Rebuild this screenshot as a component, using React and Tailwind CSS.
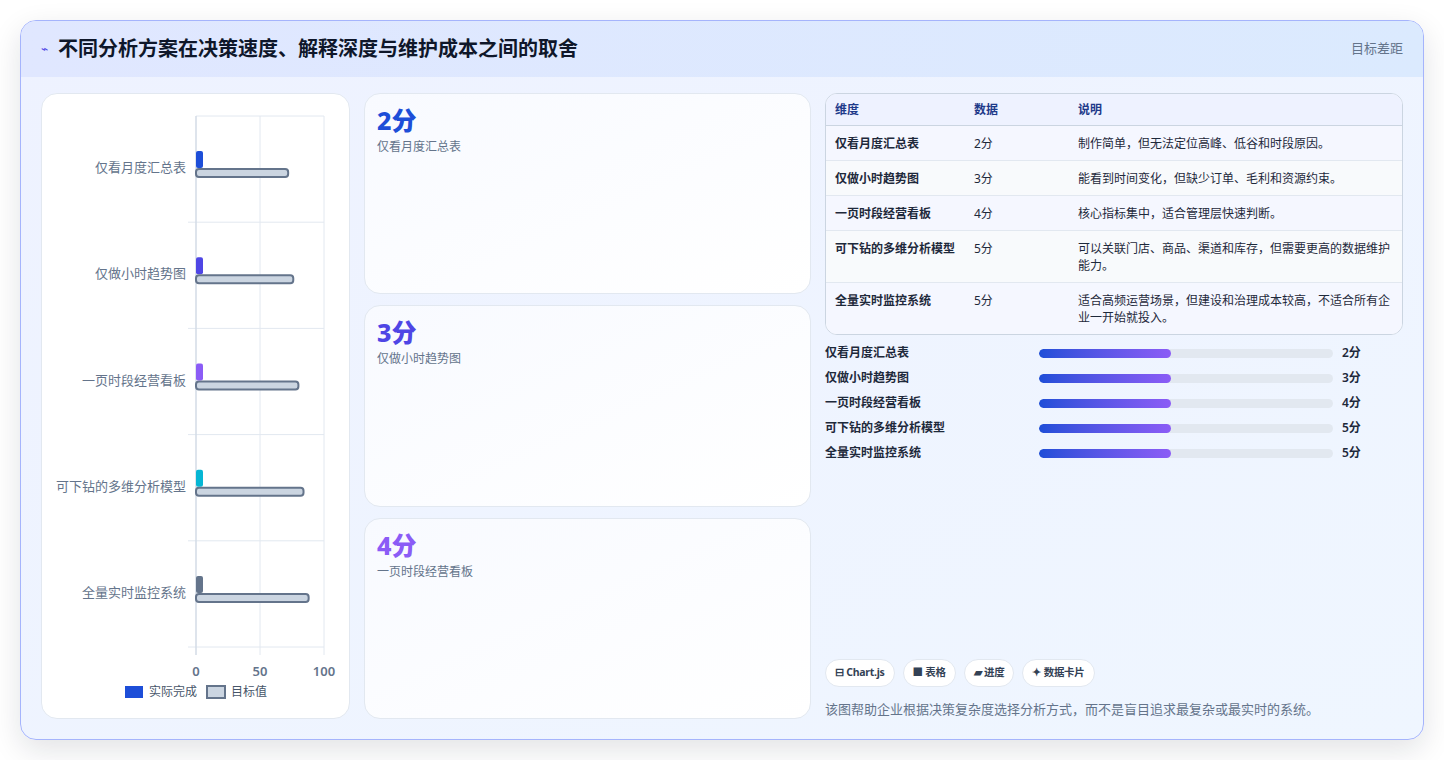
import React from 'react';

const rows = [
  { name: '仅看月度汇总表', score: '2分', note: '制作简单，但无法定位高峰、低谷和时段原因。', color: '#1d4ed8', target: 72 },
  { name: '仅做小时趋势图', score: '3分', note: '能看到时间变化，但缺少订单、毛利和资源约束。', color: '#4f46e5', target: 76 },
  { name: '一页时段经营看板', score: '4分', note: '核心指标集中，适合管理层快速判断。', color: '#8b5cf6', target: 80 },
  { name: '可下钻的多维分析模型', score: '5分', note: '可以关联门店、商品、渠道和库存，但需要更高的数据维护能力。', color: '#06b6d4', target: 84 },
  { name: '全量实时监控系统', score: '5分', note: '适合高频运营场景，但建设和治理成本较高，不适合所有企业一开始就投入。', color: '#64748b', target: 88 },
];

const Chart = () => {
  const x0 = 154, w = 128, top = 22, rowH = 106.2;
  const sx = (v) => x0 + (v / 100) * w;
  return (
    <svg width="309" height="627" className="block">
      {[0, 50, 100].map((v) => (
        <line key={v} x1={sx(v)} x2={sx(v)} y1={top} y2={top + rowH * 5 + 8} stroke="#e2e8f0" />
      ))}
      <line x1={x0} x2={x0 + w} y1={top} y2={top} stroke="#e2e8f0" />
      {[1, 2, 3, 4, 5].map((i) => (
        <line key={i} x1={x0 - 8} x2={x0 + w} y1={top + rowH * i} y2={top + rowH * i} stroke="#e2e8f0" />
      ))}
      <line x1={x0} x2={x0} y1={top} y2={top + rowH * 5 + 8} stroke="#cbd5e1" />
      {rows.map((r, i) => {
        const cy = top + rowH * i + rowH / 2;
        return (
          <g key={r.name}>
            <text x={x0 - 10} y={cy + 3} textAnchor="end" fontSize="13" fill="#64748b">{r.name}</text>
            <rect x={x0} y={cy - 18} width="7" height="17" rx="2" fill={r.color} />
            <rect x={x0} y={cy} width={(r.target / 100) * w} height="8" rx="3" fill="#cbd5e1" stroke="#64748b" strokeWidth="2" />
          </g>
        );
      })}
      {[0, 50, 100].map((v) => (
        <text key={v} x={sx(v)} y={top + rowH * 5 + 29} textAnchor="middle" fontSize="13" fontWeight="600" fill="#64748b">{v}</text>
      ))}
      <rect x="83" y="592" width="18" height="12" fill="#1d4ed8" />
      <text x="107" y="602" fontSize="12" fill="#475569">实际完成</text>
      <rect x="165" y="592" width="18" height="12" fill="#cbd5e1" stroke="#64748b" strokeWidth="2" />
      <text x="189" y="602" fontSize="12" fill="#475569">目标值</text>
    </svg>
  );
};

export default function App() {
  return (
    <div className="min-h-screen bg-white p-5" style={{ fontFamily: '"Noto Sans", "Noto Sans CJK SC", sans-serif' }}>
      <div className="h-[720px] rounded-2xl border border-[#a5b4fc] bg-gradient-to-br from-[#eef2ff] to-[#eff6ff] shadow-[0_10px_30px_rgba(15,23,42,0.12)] overflow-hidden flex flex-col">
        <div className="h-14 shrink-0 flex items-center justify-between px-5 bg-gradient-to-r from-[#e0e7ff] to-[#dbeafe]">
          <div className="flex items-center gap-[10px]">
            <span className="text-[#4f46e5] text-xs">⌁</span>
            <h1 className="text-[20px] font-bold text-[#0f172a]">不同分析方案在决策速度、解释深度与维护成本之间的取舍</h1>
          </div>
          <span className="text-[13px] text-[#64748b]">目标差距</span>
        </div>
        <div className="flex-1 flex gap-[14px] px-5 pt-4 pb-5 min-h-0">
          <div className="w-[309px] shrink-0 rounded-2xl bg-white border border-[#e2e8f0]">
            <Chart />
          </div>
          <div className="w-[447px] shrink-0 flex flex-col gap-[11px]">
            {rows.slice(0, 3).map((r) => (
              <div key={r.name} className="flex-1 rounded-2xl bg-gradient-to-br from-[#f8faff] to-white border border-[#e2e8f0] px-[12px] pt-2">
                <div className="text-[25px] font-extrabold leading-9" style={{ color: r.color }}>{r.score}</div>
                <div className="text-[12px] text-[#64748b]">{r.name}</div>
              </div>
            ))}
          </div>
          <div className="flex-1 flex flex-col">
            <div className="rounded-xl border border-[#cbd5e1] overflow-hidden bg-white text-[12px] text-[#1e293b]">
              <div className="flex h-[32px] items-center bg-[#eef2ff] font-bold text-[#1e3a8a] border-b border-[#cbd5e1]">
                <div className="w-[148px] pl-[9px]">维度</div>
                <div className="w-[104px]">数据</div>
                <div className="flex-1">说明</div>
              </div>
              {rows.map((r, i) => (
                <div key={r.name} className={`flex py-[8.5px] ${i % 2 ? 'bg-[#f8fafc]' : 'bg-[#f5f7ff]'} ${i < 4 ? 'border-b border-[#e2e8f0]' : ''}`}>
                  <div className="w-[148px] pl-[9px] font-semibold leading-[17px]">{r.name}</div>
                  <div className="w-[104px] leading-[17px]">{r.score}</div>
                  <div className="flex-1 pr-3 leading-[17px]">{r.note}</div>
                </div>
              ))}
            </div>
            <div className="mt-[9px] flex flex-col gap-[7px]">
              {rows.map((r) => (
                <div key={r.name} className="flex items-center h-[18px] text-[12px] font-semibold text-[#1e293b]">
                  <div className="w-[214px]">{r.name}</div>
                  <div className="w-[294px] h-[9px] rounded-full bg-[#e2e8f0] overflow-hidden">
                    <div className="h-full w-[45%] rounded-full bg-gradient-to-r from-[#1d4ed8] to-[#8b5cf6]" />
                  </div>
                  <div className="ml-[9px]">{r.score}</div>
                </div>
              ))}
            </div>
            <div className="mt-auto flex gap-2">
              {['⊟ Chart.js', '■ 表格', '▰ 进度', '✦ 数据卡片'].map((c) => (
                <span key={c} className="h-7 px-[9px] flex items-center rounded-full bg-white border border-[#e2e8f0] text-[10.5px] font-bold text-[#334155] tracking-tight">{c}</span>
              ))}
            </div>
            <p className="mt-[13px] text-[13px] text-[#64748b]">该图帮助企业根据决策复杂度选择分析方式，而不是盲目追求最复杂或最实时的系统。</p>
          </div>
        </div>
      </div>
    </div>
  );
}
